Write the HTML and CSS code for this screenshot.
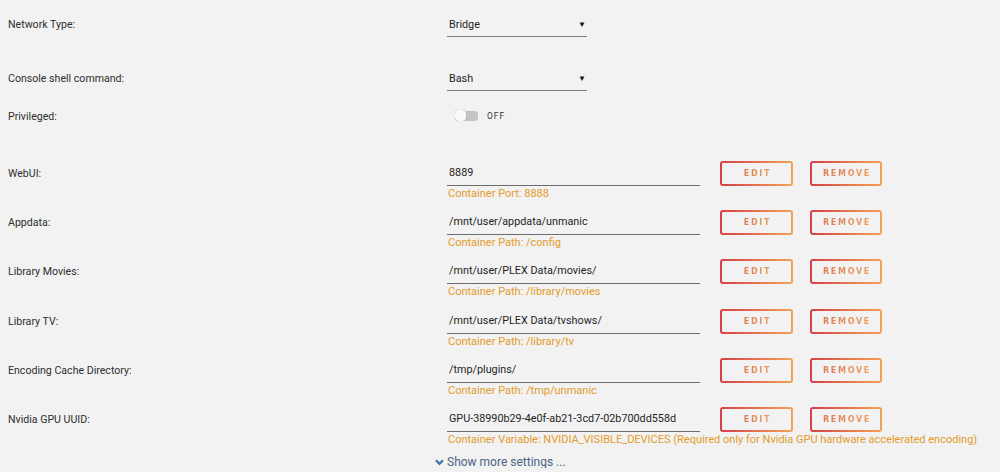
FILE: index.html
```html
<!DOCTYPE html>
<html>
<head>
<meta charset="utf-8">
<link rel="stylesheet" href="styles.css">
</head>
<body>
<div class="form">
  <div class="row row-select">
    <div class="label">Network Type:</div>
    <div class="select"><span>Bridge</span><span class="arrow">&#9660;</span></div>
  </div>
  <div class="row row-select second">
    <div class="label">Console shell command:</div>
    <div class="select"><span>Bash</span><span class="arrow">&#9660;</span></div>
  </div>
  <div class="row row-toggle">
    <div class="label">Privileged:</div>
    <div class="toggle"><span class="track"><span class="knob"></span></span><span class="off">OFF</span></div>
  </div>

  <div class="paths">
    <div class="prow">
      <div class="label">WebUI:</div>
      <div class="field">
        <div class="input">8889</div>
        <div class="hint">Container Port: 8888</div>
      </div>
      <div class="btn edit"><span>EDIT</span></div>
      <div class="btn remove"><span>REMOVE</span></div>
    </div>
    <div class="prow">
      <div class="label">Appdata:</div>
      <div class="field">
        <div class="input">/mnt/user/appdata/unmanic</div>
        <div class="hint">Container Path: /config</div>
      </div>
      <div class="btn edit"><span>EDIT</span></div>
      <div class="btn remove"><span>REMOVE</span></div>
    </div>
    <div class="prow">
      <div class="label">Library Movies:</div>
      <div class="field">
        <div class="input">/mnt/user/PLEX Data/movies/</div>
        <div class="hint">Container Path: /library/movies</div>
      </div>
      <div class="btn edit"><span>EDIT</span></div>
      <div class="btn remove"><span>REMOVE</span></div>
    </div>
    <div class="prow">
      <div class="label">Library TV:</div>
      <div class="field">
        <div class="input">/mnt/user/PLEX Data/tvshows/</div>
        <div class="hint">Container Path: /library/tv</div>
      </div>
      <div class="btn edit"><span>EDIT</span></div>
      <div class="btn remove"><span>REMOVE</span></div>
    </div>
    <div class="prow">
      <div class="label">Encoding Cache Directory:</div>
      <div class="field">
        <div class="input">/tmp/plugins/</div>
        <div class="hint">Container Path: /tmp/unmanic</div>
      </div>
      <div class="btn edit"><span>EDIT</span></div>
      <div class="btn remove"><span>REMOVE</span></div>
    </div>
    <div class="prow">
      <div class="label">Nvidia GPU UUID:</div>
      <div class="field">
        <div class="input">GPU-38990b29-4e0f-ab21-3cd7-02b700dd558d</div>
        <div class="hint nowrap">Container Variable: NVIDIA_VISIBLE_DEVICES (Required only for Nvidia GPU hardware accelerated encoding)</div>
      </div>
      <div class="btn edit"><span>EDIT</span></div>
      <div class="btn remove"><span>REMOVE</span></div>
    </div>
  </div>

  <div class="more">
    <svg class="chev" width="9" height="7" viewBox="0 0 9 7"><path d="M1 1.2 L4.5 4.8 L8 1.2" fill="none" stroke="#3f73ad" stroke-width="2.2"/></svg>
    <span>Show more settings ...</span>
  </div>
</div>
</body>
</html>
```

FILE: styles.css
```css
html, body {
  margin: 0;
  padding: 0;
  background: #f2f2f2;
}
body {
  font-family: Roboto, "Liberation Sans", sans-serif;
  font-size: 10.6px;
  color: #2b2b2b;
  overflow: hidden;
}
.form {
  padding: 12px 0 0 8px;
  display: flex;
  flex-direction: column;
}
.row {
  display: grid;
  grid-template-columns: 439px auto;
  align-items: center;
}
.label {
  color: #2e2e2e;
}
.row-select {
  height: 25px;
  margin-bottom: 29px;
}
.row-select.second {
  margin-bottom: 15px;
}
.select {
  width: 140px;
  height: 25px;
  box-sizing: border-box;
  border-bottom: 1px solid #7a7a7a;
  display: flex;
  justify-content: space-between;
  align-items: center;
  padding: 0 1px 0 2px;
  color: #222;
  font-size: 10.8px;
}
.arrow {
  font-size: 8px;
  color: #111;
}
.row-toggle {
  height: 20px;
  margin-bottom: 35px;
}
.toggle {
  display: flex;
  align-items: center;
  padding-left: 8px;
}
.track {
  width: 23px;
  height: 10px;
  border-radius: 3px;
  background: #c4c4c4;
  position: relative;
  display: inline-block;
}
.knob {
  position: absolute;
  left: 0;
  top: -1px;
  width: 11px;
  height: 11px;
  border-radius: 4px;
  background: #fafafa;
  box-shadow: 0 0 1px rgba(0,0,0,0.35);
}
.off {
  margin-left: 9px;
  font-size: 8.5px;
  letter-spacing: 1px;
  color: #333;
}
.paths {
  display: flex;
  flex-direction: column;
}
.prow {
  display: flex;
  height: 49.2px;
  align-items: flex-start;
}
.prow .label {
  width: 439px;
  flex: none;
  height: 25px;
  line-height: 25px;
}
.field {
  width: 253px;
  flex: none;
  display: flex;
  flex-direction: column;
}
.input {
  height: 25px;
  line-height: 24px;
  box-sizing: border-box;
  border-bottom: 1px solid #6d6d6d;
  padding-left: 2px;
  color: #1e1e1e;
  font-size: 10.8px;
}
.hint {
  height: 14px;
  line-height: 15px;
  font-size: 11px;
  color: #e39b2b;
  padding-left: 1px;
}
.nowrap {
  white-space: nowrap;
}
.btn {
  flex: none;
  height: 25px;
  box-sizing: border-box;
  border: 2px solid transparent;
  border-radius: 3px;
  background:
    linear-gradient(#f2f2f2, #f2f2f2) padding-box,
    linear-gradient(90deg, #d5404a, #f3a354) border-box;
  display: flex;
  align-items: center;
  justify-content: center;
}
.btn.edit {
  margin-left: 20px;
  width: 73px;
}
.btn.remove {
  margin-left: 17px;
  width: 72px;
}
.btn span {
  font-family: "DejaVu Sans", sans-serif;
  font-size: 8px;
  font-weight: bold;
  letter-spacing: 1.7px;
  padding-left: 2px;
  background: linear-gradient(90deg, #dd7a52, #eaa062);
  -webkit-background-clip: text;
  background-clip: text;
  color: transparent;
}
.more {
  display: flex;
  align-items: center;
  height: 12px;
  margin-left: 427px;
  color: #4a6484;
  font-size: 12px;
}
.chev {
  margin-right: 3px;
}
```
